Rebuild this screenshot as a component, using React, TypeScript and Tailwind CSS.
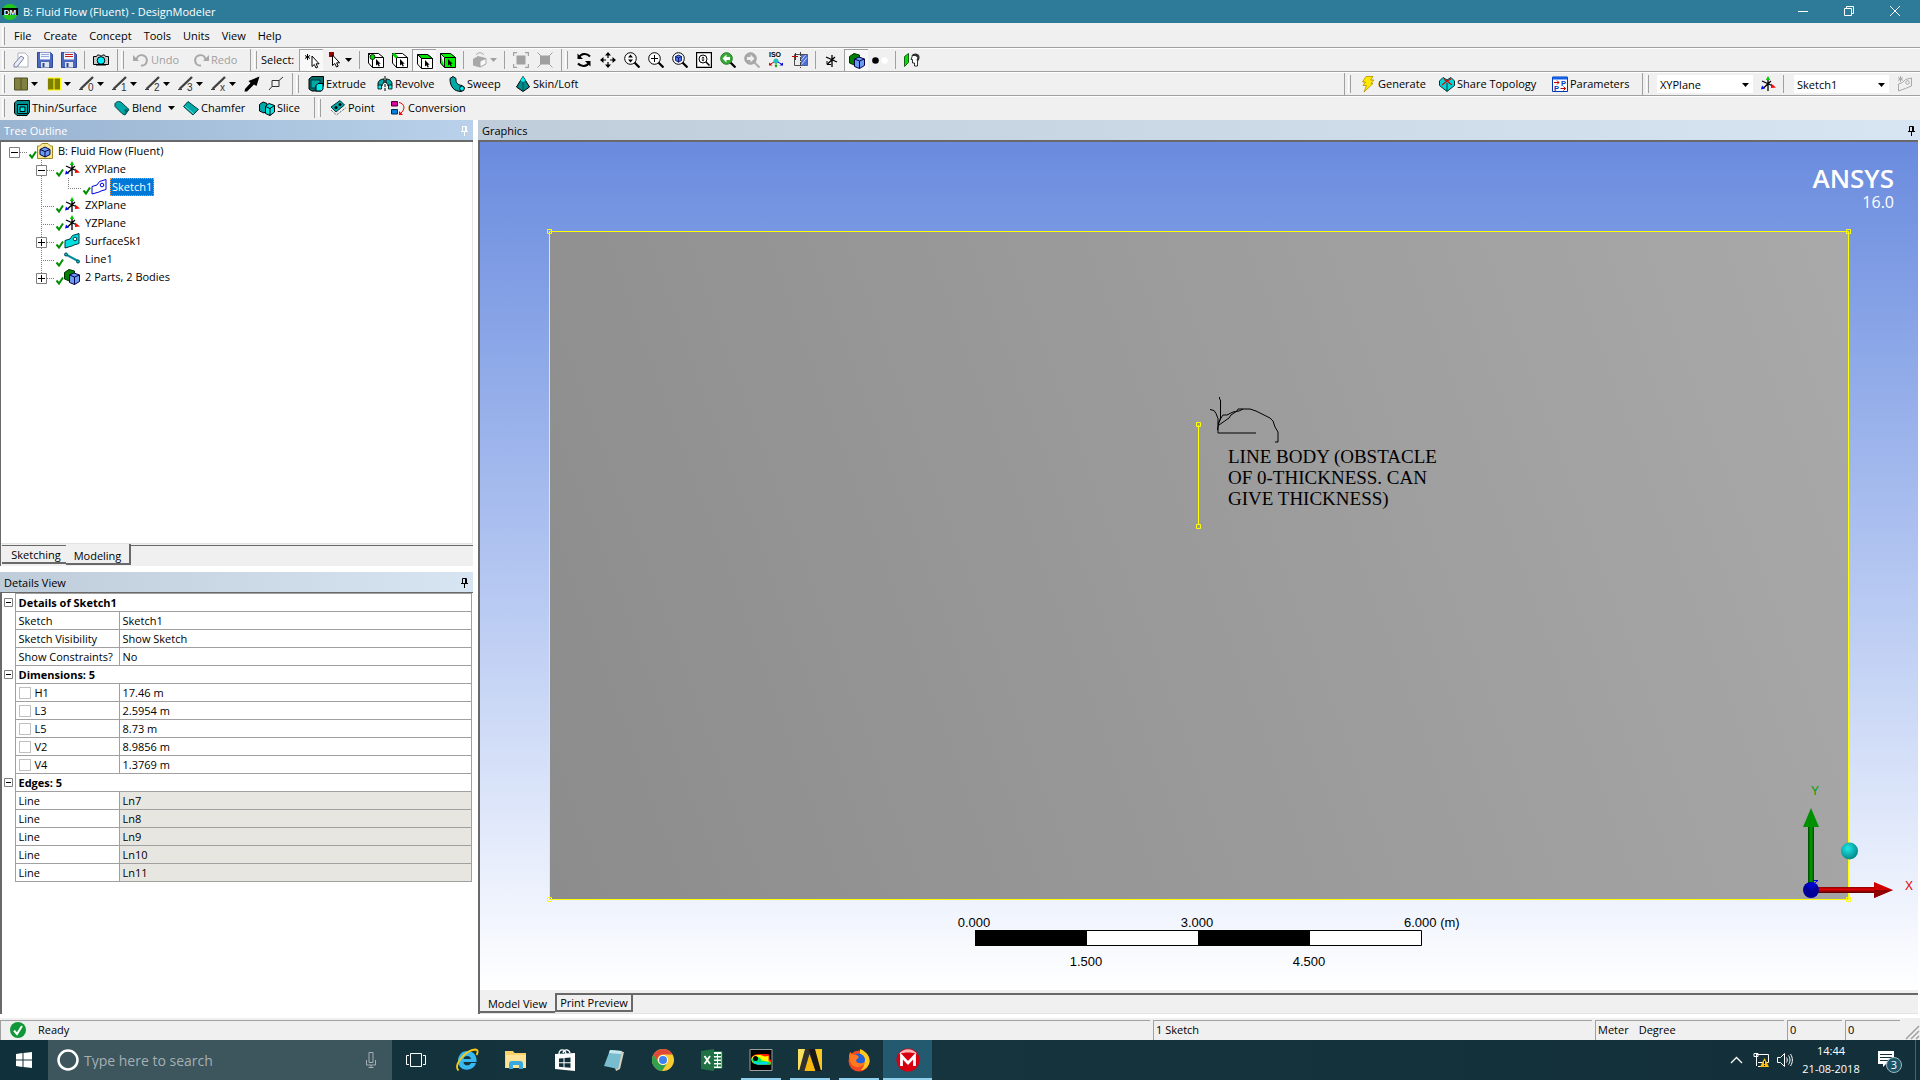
import type { ReactNode } from "react"
import clsx from "clsx"

type IconProps = { children: ReactNode; size?: number; className?: string }

const Icon = ({ children, size = 16, className }: IconProps) => (
  <svg width={size} height={size} viewBox="0 0 16 16" fill="none" className={clsx("shrink-0", className)} aria-hidden="true">
    {children}
  </svg>
)

const Caret = ({ color = "#000" }: { color?: string }) => (
  <svg width="7" height="4" viewBox="0 0 7 4" className="shrink-0" aria-hidden="true">
    <path d="M0 0h7L3.5 4z" fill={color} />
  </svg>
)

/* ---------- icons ---------- */

const CubeCursor = ({ mode }: { mode: "point" | "edge" | "face" | "body" }) => (
  <Icon>
    <path d="M4.500 5.500h11v10h-11zM4.500 5.500L.5 1.500h10l5 4M.5 1.500V11l4 4.500" fill={mode === "body" ? "#00f000" : "#fff"} stroke="#000" />
    {mode === "face" && <path d="M1 1.500h9.500l5 4h-11z" fill="#00e000" stroke="#000" />}
    {mode === "point" && <circle cx="4.500" cy="5" r="2.500" fill="#00e000" stroke="#000" strokeWidth=".8" />}
    {mode === "edge" && <path d="M1 1.500l4 4" stroke="#00d000" strokeWidth="3" />}
    <path d="M8 7v6.500l1.500-1.300 1.200 2.300 1.200-.6-1.100-2.200h1.900z" fill="#000" />
  </Icon>
)

const Magnifier = ({ children, ring = "#000", fill = "#fff", handle = "#000" }: { children?: ReactNode; ring?: string; fill?: string; handle?: string }) => (
  <Icon>
    <path d="M10.500 10.500l5 5" stroke={handle} strokeWidth="2.200" />
    <circle cx="6.500" cy="6.500" r="5.800" fill={fill} stroke={ring} />
    {children}
  </Icon>
)

const Axes = ({ plain = false }: { plain?: boolean }) => (
  <Icon>
    <path d="M8 3v12M2 5l11 5M3.500 12L11 5" stroke="#000" strokeWidth="1.300" />
    {!plain && (
      <>
        <path d="M8 0l2.200 4H5.800z" fill="#00c800" />
        <path d="M11 7.500l5 4-5 .5z" fill="#f00" />
        <path d="M1 13.500l1-4 3 3z" fill="#00f" />
      </>
    )}
    {plain && <path d="M3 9v3.500h4" stroke="#000" />}
  </Icon>
)

const SketchShape = ({ color = "#0000e0", fill = "none" }: { color?: string; fill?: string }) => (
  <Icon>
    <path d="M1 7.500l5-1.500 2.500-3.500 6.500-2v10l-5 1.500-2 1-7 2z" fill={fill} stroke={color} />
    <circle cx="11" cy="6" r="1.800" stroke={color} fill="#fff" />
  </Icon>
)

const Bodies = () => (
  <Icon>
    <path d="M.5 3.500L5 .5l5.500 1.500v8l-4 2.500L.5 10z" fill="#008000" stroke="#003000" />
    <path d="M5.500 6l4.500-2 5.500 2v6.500L10.500 15.500l-5-2z" fill="#6c9cf0" stroke="#000050" />
    <path d="M5.500 6l5 2 5-2M10.500 8v7.500" stroke="#000050" />
  </Icon>
)

const Floppy = ({ lines }: { lines: string }) => (
  <Icon>
    <path d="M.5.5h13l2 2v13H.5z" fill="#4a68c0" stroke="#30489a" />
    <path d="M3 .5h10v7H3z" fill="#f4f6ff" />
    <path d="M4 2.500h8M4 4.500h8" stroke={lines} />
    <path d="M4 10h8v5.500H4z" fill="#dfe3ea" />
    <path d="M5.500 11h2v4h-2z" fill="#30489a" />
  </Icon>
)

const PencilLine = ({ digit }: { digit: string }) => (
  <Icon>
    <path d="M1.500 13L14 1" stroke="#404040" strokeWidth="2.400" />
    <path d="M0 13.500h4" stroke="#404040" />
    <text x="9" y="15" fontSize="10" fontFamily="Liberation Sans, sans-serif" fill="#303030">{digit}</text>
  </Icon>
)

const Swatch = ({ color, line, divider }: { color: string; line: string; divider: string }) => (
  <Icon>
    <path d="M1.500 2h13v12h-13z" fill={color} stroke={line} />
    <path d="M8 2v12" stroke={divider} />
  </Icon>
)

const TEAL = "#00a8a8"

const icons = {
  eraser: (
    <Icon>
      <path d="M5 1h7l3 3v11H5z" fill="#fff" stroke="#b0b4c0" />
      <path d="M1 12l7-8 3 2-7 9H1z" fill="#e8ebf4" stroke="#7880a0" />
    </Icon>
  ),
  camera: (
    <Icon>
      <path d="M.5 4.500h3l1-1.500h2l1 1h1l1-1h2l1 1.500h3v8H.5z" fill="#c8c8c8" stroke="#000" />
      <circle cx="8" cy="8.500" r="3.800" fill="#00f0ff" stroke="#000" />
      <path d="M3 13h10" stroke="#000" />
    </Icon>
  ),
  undo: (
    <Icon>
      <path d="M3.500 7.500A5.200 5.200 0 1 1 8 13.500" stroke="#a8a8a8" strokeWidth="2" />
      <path d="M0 3v6h6z" fill="#a8a8a8" />
    </Icon>
  ),
  redo: (
    <Icon>
      <path d="M12.500 7.500A5.200 5.200 0 1 0 8 13.500" stroke="#a8a8a8" strokeWidth="2" />
      <path d="M16 3v6h-6z" fill="#a8a8a8" />
    </Icon>
  ),
  newSelection: (
    <Icon>
      <path d="M3.500 1v6M1 2.500l5 3M6 2.500l-5 3" stroke="#000" />
      <path d="M8 3v10.500l2.300-2 1.700 3.500 1.700-.8-1.600-3.400h3z" fill="#fff" stroke="#000" />
    </Icon>
  ),
  pointer: (
    <Icon>
      <path d="M2 0h5v5H2z" fill="#900" />
      <path d="M5.500 3v10.500l2.300-2 1.700 3.500 1.700-.8-1.600-3.400h3z" fill="#fff" stroke="#000" />
    </Icon>
  ),
  viewBox: (
    <Icon>
      <path d="M1 7l5-3 8 2v6l-6 3.500-7-2z" fill="#a8a8a8" />
      <path d="M8 9l6-2.500v5.500l-6 3z" fill="#f8f8f8" stroke="#a8a8a8" />
      <path d="M4 3c2-3 6-3 8 0" stroke="#a8a8a8" />
    </Icon>
  ),
  expand: (
    <Icon>
      <path d="M3.500 3.500h9v9h-9z" fill="#a0a0a0" />
      <path d="M.5 4V.5H4M12 .5h3.500V4M15.500 12v3.500H12M4 15.500H.5V12" stroke="#a0a0a0" strokeWidth="1.400" />
    </Icon>
  ),
  shrink: (
    <Icon>
      <path d="M3 3.500h10v9H3z" fill="#a0a0a0" />
      <path d="M.5.5l15 15M15.500.5l-15 15" stroke="#a0a0a0" />
    </Icon>
  ),
  rotate: (
    <Icon>
      <path d="M3 5.500C5 1 11 1 14 4.500M13 10.500c-2 4.500-8 4.500-11 1" stroke="#000" strokeWidth="2" />
      <path d="M1.500 1.500v5.500H7zM14.500 14.500V9H9z" fill="#000" />
    </Icon>
  ),
  pan: (
    <Icon>
      <path d="M8 1v5M8 10v5M1 8h5M10 8h5" stroke="#000" strokeWidth="1.200" />
      <path d="M8 0l3 3.500H5zM8 16l3-3.500H5zM0 8l3.500-3v6zM16 8l-3.500-3v6z" fill="#000" />
    </Icon>
  ),
  zoom: (
    <Magnifier>
      <path d="M6.500 2.500l2.500 3H4zM6.500 10.500L9 7.500H4z" fill="#000" />
    </Magnifier>
  ),
  zoomIn: (
    <Magnifier>
      <path d="M6.500 3v7M3 6.500h7" stroke="#000" />
    </Magnifier>
  ),
  zoomFit: (
    <Magnifier>
      <path d="M3.500 4.500l3-1.500 3 1.500v4l-3 1.700-3-1.700z" fill="#4a78e8" stroke="#000060" strokeWidth=".8" />
      <path d="M3.500 4.500l3 1.500 3-1.500M6.500 6v4" stroke="#000060" strokeWidth=".8" />
    </Magnifier>
  ),
  zoomBox: (
    <Icon>
      <path d="M.6.600h14.800v14.800H.6z" fill="#fff" stroke="#000" strokeWidth="1.200" />
      <circle cx="7" cy="7" r="4" stroke="#000" />
      <path d="M10 10l3.500 3.500" stroke="#000" strokeWidth="1.600" />
      <path d="M7 4.500l1.500 2h-3zM7 9.500l1.500-2h-3z" fill="#000" />
    </Icon>
  ),
  prevView: (
    <Magnifier ring="#1c7a1c" fill="#38a838">
      <path d="M2.500 6.500l4-4v2.500H10v3H6.500v2.500z" fill="#fff" />
    </Magnifier>
  ),
  nextView: (
    <Magnifier ring="#a0a0a0" fill="#a8a8a8" handle="#b0b0b0">
      <path d="M10.500 6.500l-4-4v2.500H3v3h3.500v2.500z" fill="#f0f0f0" />
    </Magnifier>
  ),
  iso: (
    <Icon>
      <text x="1" y="5" fontSize="7" fontWeight="700" fontFamily="Liberation Sans, sans-serif" fill="#000">ISO</text>
      <circle cx="8" cy="9" r="2.500" fill="#20c0c0" />
      <path d="M6 10l-4 2.500" stroke="#c00" />
      <path d="M10 10l4 2.500" stroke="#00c" />
      <path d="M8 11v4" stroke="#0a0" />
      <path d="M1 10.500v3h3.500z" fill="#c00" />
      <path d="M15 10.500v3h-3.500z" fill="#00c" />
      <path d="M6.500 13h3L8 16z" fill="#0a0" />
    </Icon>
  ),
  lookAt: (
    <Icon>
      <path d="M2.500 2.500h13v11h-13z" fill="#ececec" stroke="#505050" />
      <path d="M9 3h6.500v10.500H9z" fill="#5070d8" />
      <path d="M9.500 8l4-5M9.500 12.500l5.500-7" stroke="#c8d8ff" />
      <path d="M8.500 0v16" stroke="#404040" strokeDasharray="4 1" />
      <path d="M0 4.500h6M3.500 1v7" stroke="#c00000" />
    </Icon>
  ),
  dots: (
    <Icon>
      <circle cx="3.500" cy="8.500" r="3.300" fill="#000" />
      <circle cx="12.500" cy="8.500" r="3.200" fill="#fff" />
    </Icon>
  ),
  face: (
    <Icon>
      <path d="M.5 4.500l4-3v9l-4 4z" fill="#00e000" stroke="#004000" strokeWidth=".8" />
      <path d="M8.500 3.500l-1.500 4h1.500v3.500h2v3h3v-6l1-3-2-2z" fill="#fff" stroke="#000" strokeWidth=".8" />
      <path d="M7.500 4C8 .5 15 .5 15.500 4.500c.3 3-1 4-2 5l-1-1.500 1-2.500-2-1.500z" fill="#303030" />
    </Icon>
  ),
  planeArrow: (
    <Icon>
      <path d="M15.500.5L12.500 10l-2.500-1.500L3 15.500.500 15.500 1 13 6.500 7 4.500 5z" fill="#000" />
    </Icon>
  ),
  vertexLine: (
    <Icon>
      <path d="M4 4.500h7v6H4zM4 10.500L1 14M11 4.500L15 1" stroke="#303030" />
    </Icon>
  ),
  extrude: (
    <Icon>
      <path d="M1 3l3-2.500h11.500V9L13 15H4l-3-2z" fill="#006c6c" stroke="#000" />
      <path d="M3 4h9v5H8v3H3z" fill={TEAL} stroke="#003838" />
      <path d="M8 9.500l2-2h5v5.500l-1.500 2H8z" fill="#00f0f0" stroke="#000" />
    </Icon>
  ),
  revolve: (
    <Icon>
      <path d="M1 8c0-4 4-5 6-5v4c-1 0-2 1-2 3l-3.500 1zM15 8c0-4-4-5-6-5v4c1 0 2 1 2 3l3.500 1z" fill={TEAL} stroke="#000" />
      <path d="M1 9h3.500v4H1zM11.500 9H15v4h-3.500z" fill="#00f0f0" stroke="#000" strokeWidth=".8" />
      <path d="M8 0v16" stroke="#000" strokeDasharray="3 1" />
    </Icon>
  ),
  sweep: (
    <Icon>
      <path d="M1 2.500l3-2 3 2C6.500 7 9 9 13 9.500l2.500 2.500-3 3.500C5 15.500 1 11 1 2.500z" fill={TEAL} stroke="#000" />
      <ellipse cx="13" cy="12.500" rx="2.300" ry="2.600" fill="#00f0f0" stroke="#000" />
    </Icon>
  ),
  skin: (
    <Icon>
      <path d="M8 .5l2.500 4L14.500 11 8 15.500 1.500 11l4-6.500z" fill="#008c8c" stroke="#000" />
      <path d="M8 .5l2.500 4L8 6 5.500 4.500z" fill="#00f0f0" />
      <path d="M8 6v9.500" stroke="#004848" />
    </Icon>
  ),
  thin: (
    <Icon>
      <path d="M.5 3L3 .5h12.500V12L13 15.500H3L.5 13z" fill="#008c8c" stroke="#000" />
      <path d="M3.500 4.500h10v9h-10z" fill="#00b0b0" stroke="#000" />
      <path d="M6 7h5v4.500H6z" fill="#00e8e8" stroke="#000" />
    </Icon>
  ),
  blend: (
    <Icon>
      <path d="M1 3.500C3 1 6 1 8 3l7 6.500-4 5.500-3-1.500L1 6.500z" fill={TEAL} stroke="#004040" />
      <path d="M10.500 9L15 9.500 11 15z" fill="#006868" />
    </Icon>
  ),
  chamfer: (
    <Icon>
      <path d="M.5 6.500L5 1.500l10.500 8-5.500 5.500z" fill={TEAL} stroke="#004040" />
      <path d="M2 6l9 8" stroke="#60e0e0" />
    </Icon>
  ),
  slice: (
    <Icon>
      <path d="M.5 4.500L4 2l4 1.500v7L5 13l-4.500-2z" fill={TEAL} stroke="#000" />
      <path d="M6.500 6.500L10 3.500l5.500 2v6.500L11 15.500l-4.500-2z" fill="#00e8e8" stroke="#000" />
      <path d="M6.500 6.500l4.500 2 4.500-3M11 8.500v7" stroke="#000" />
    </Icon>
  ),
  point: (
    <Icon>
      <path d="M1 7l9-6.500L14.500 5 6 12z" fill={TEAL} stroke="#003838" />
      <path d="M1 10l5.500 5L15.500 8" stroke="#404040" strokeDasharray="1 1" />
      <circle cx="6" cy="7.500" r="1.500" fill="#000" />
      <circle cx="10" cy="4.500" r="1.500" fill="#000" />
    </Icon>
  ),
  conversion: (
    <Icon>
      <path d="M1.500 1.500h6V6h-6z" fill="#e000a0" stroke="#400030" />
      <path d="M1.500 9.500h6V14h-6z" fill="#0080e0" stroke="#002850" />
      <path d="M9 2.500c6 1 6.500 7 1.500 11" stroke="#f00000" />
      <path d="M9 11v4h4z" fill="#f00000" />
    </Icon>
  ),
  bolt: (
    <Icon>
      <path d="M6 .5h7L10.500 4H14l-3 3.500h2L4 16l2.500-6.500H3L5.500 6H2.500z" fill="#ffe800" stroke="#b09000" strokeWidth=".8" />
    </Icon>
  ),
  share: (
    <Icon>
      <path d="M.5 5L4 1.500l4 2.500 4-2.500L15.500 5v4.500L8 15.500.500 9.500z" fill="#00d8d8" stroke="#003030" />
      <path d="M3 9l5-4 5 4M8 5L5 3.500M8 5l4-2" stroke="#e00000" strokeWidth="1.200" />
      <path d="M8 7v8" stroke="#003030" />
    </Icon>
  ),
  params: (
    <Icon>
      <path d="M.5 1h15v14.500H.5z" fill="#fff" stroke="#0038b0" />
      <path d="M.5 1h15v2.500H.5z" fill="#1060e8" />
      <text x="9" y="9.500" fontSize="7.500" fontWeight="700" fontFamily="Liberation Sans, sans-serif" fill="#0038c0">P</text>
      <text x="2" y="14.500" fontSize="7.500" fontWeight="700" fontFamily="Liberation Sans, sans-serif" fill="#0038c0">P</text>
      <path d="M2 6.500h5M5 4.500l2 2-2 2M8.500 12.500h5M11.500 10.500l2 2-2 2" stroke="#c00000" />
    </Icon>
  ),
  newSketch: (
    <Icon>
      <path d="M1.500 8l4-1.500 3-3 6-1.500v8l-5 2-8 3z" stroke="#a8a8a8" />
      <circle cx="10.500" cy="6.500" r="1.800" stroke="#a8a8a8" />
      <path d="M3.500 0v6M1 1.500l5 3M6 1.500l-5 3" stroke="#a8a8a8" />
    </Icon>
  ),
  project: (
    <Icon>
      <path d="M.5 3h2L5 .5h6L13.500 3h2v12.500H.5z" fill="#f8e890" stroke="#a08820" />
      <path d="M3 6.500L8 4l5 2.500v5L8 14l-5-2.500z" fill="#6c9cf0" stroke="#000050" />
      <path d="M3 6.500l5 2 5-2M8 8.500V14" stroke="#000050" />
    </Icon>
  ),
  lineBody: (
    <Icon>
      <path d="M2 3.500l12 6.500" stroke="#008c9c" strokeWidth="2" />
      <circle cx="2" cy="3.500" r="1.500" fill="#00c8d8" stroke="#004048" />
      <circle cx="14" cy="10.500" r="1.500" fill="#00c8d8" stroke="#004048" />
    </Icon>
  ),
}

/* ---------- toolbars ---------- */

const Group = ({ children, className, last = false }: { children: ReactNode; className?: string; last?: boolean }) => (
  <div className={clsx("flex items-center h-full pl-[2px]", !last && "border-r border-[#a0a0a0] mr-px", className)}>
    <span className="w-[3px] h-[18px] mr-1 border-l border-l-white border-r border-r-[#a0a0a0]" />
    {children}
  </div>
)

const Sep = () => <span className="w-px h-[18px] ml-[3px] mr-1 bg-[#a0a0a0]" />

type ToolProps = { icon: ReactNode; name: string; pressed?: boolean; disabled?: boolean; caret?: boolean }

const Tool = ({ icon, name, pressed, disabled, caret }: ToolProps) => (
  <button
    aria-label={name}
    title={name}
    disabled={disabled}
    className={clsx(
      "flex items-center h-[22px] px-1 gap-[2px]",
      caret ? "w-[33px]" : "w-6",
      pressed && "bg-[#f8f8f8] border-l border-t border-[#a0a0a0]"
    )}
  >
    {icon}
    {caret && <Caret color={disabled ? "#a0a0a0" : "#000"} />}
  </button>
)

const LabelTool = ({ icon, text, width, disabled, caret }: { icon: ReactNode; text: string; width: string; disabled?: boolean; caret?: boolean }) => (
  <button disabled={disabled} className={clsx("flex items-center h-[22px] pl-[5px] gap-[2px] whitespace-nowrap", width, disabled && "text-[#a0a0a0]")}>
    {icon}
    <span>{text}</span>
    {caret && <span className="ml-1"><Caret /></span>}
  </button>
)

const Combo = ({ label, options, className }: { label: string; options: string[]; className: string }) => (
  <div className={clsx("relative h-[18px]", className)}>
    <select aria-label={label} className="appearance-none w-full h-full bg-white px-[3px] pt-px outline-none">
      {options.map((option) => (
        <option key={option}>{option}</option>
      ))}
    </select>
    <span className="absolute right-1 top-2 pointer-events-none"><Caret /></span>
  </div>
)

const rowClass = "flex items-center h-6 pb-px border-b border-white shadow-[inset_0_-1px_0_#a0a0a0]"

const Toolbars = () => (
  <div className="bg-[#f0f0f0]">
    <nav className="flex items-center h-[26px] pl-[2px] border-b border-white shadow-[inset_0_-1px_0_#a0a0a0]">
      <span className="w-[3px] h-[18px] mr-1 border-l border-l-white border-r border-r-[#a0a0a0]" />
      {["File", "Create", "Concept", "Tools", "Units", "View", "Help"].map((item) => (
        <button key={item} className="px-[5px] mr-[2px]">{item}</button>
      ))}
    </nav>

    <div className={rowClass}>
      <Group className="pr-1">
        <Tool name="New" icon={icons.eraser} />
        <Tool name="Save" icon={<Floppy lines="#98a8d8" />} />
        <Tool name="Save as" icon={<Floppy lines="#c02020" />} />
        <Sep />
        <Tool name="Capture" icon={icons.camera} />
      </Group>
      <Group className="pr-[2px]">
        <LabelTool disabled text="Undo" icon={icons.undo} width="w-[60px]" />
        <LabelTool disabled text="Redo" icon={icons.redo} width="w-[60px]" />
      </Group>
      <Group className="pr-1">
        <span className="w-[38px]">Select:</span>
        <Tool pressed name="New selection" icon={icons.newSelection} />
        <Tool caret name="Select mode" icon={icons.pointer} />
        <Sep />
        <Tool name="Points" icon={<CubeCursor mode="point" />} />
        <Tool name="Edges" icon={<CubeCursor mode="edge" />} />
        <Tool pressed name="Faces" icon={<CubeCursor mode="face" />} />
        <Tool name="Bodies" icon={<CubeCursor mode="body" />} />
        <Sep />
        <Tool caret disabled name="Extend selection" icon={icons.viewBox} />
        <Sep />
        <Tool disabled name="Expand" icon={icons.expand} />
        <Tool disabled name="Shrink" icon={icons.shrink} />
      </Group>
      <Group last>
        <Tool name="Rotate" icon={icons.rotate} />
        <Tool name="Pan" icon={icons.pan} />
        <Tool name="Zoom" icon={icons.zoom} />
        <Tool name="Zoom in" icon={icons.zoomIn} />
        <Tool name="Zoom to fit" icon={icons.zoomFit} />
        <Tool name="Box zoom" icon={icons.zoomBox} />
        <Tool name="Previous view" icon={icons.prevView} />
        <Tool disabled name="Next view" icon={icons.nextView} />
        <Tool name="Isometric" icon={icons.iso} />
        <Tool name="Look at" icon={icons.lookAt} />
        <Sep />
        <Tool name="Display plane" icon={<Axes plain />} />
        <Tool pressed name="Display model" icon={<Bodies />} />
        <Tool name="Display points" icon={icons.dots} />
        <Sep />
        <Tool name="Look at face" icon={icons.face} />
      </Group>
    </div>

    <div className={rowClass}>
      <Group className="pr-1">
        <Tool caret name="Face color" icon={<Swatch color="#808040" line="#505020" divider="#505020" />} />
        <Tool caret name="Edge color" icon={<Swatch color="#808000" line="#ffff00" divider="#ffff00" />} />
        {["0", "1", "2", "3", "x"].map((digit) => (
          <Tool key={digit} caret name={`Edge joint ${digit}`} icon={<PencilLine digit={digit} />} />
        ))}
        <Tool name="Edge direction" icon={icons.planeArrow} />
        <Tool name="Show vertices" icon={icons.vertexLine} />
      </Group>
      <Group className="flex-1">
        <LabelTool text="Extrude" icon={icons.extrude} width="w-[69px]" />
        <LabelTool text="Revolve" icon={icons.revolve} width="w-[72px]" />
        <LabelTool text="Sweep" icon={icons.sweep} width="w-[66px]" />
        <LabelTool text="Skin/Loft" icon={icons.skin} width="w-[78px]" />
      </Group>
      <Group className="pr-[2px]">
        <LabelTool text="Generate" icon={icons.bolt} width="w-[79px]" />
        <LabelTool text="Share Topology" icon={icons.share} width="w-[113px]" />
        <LabelTool text="Parameters" icon={icons.params} width="w-[93px]" />
      </Group>
      <Group last className="pr-[3px]">
        <Combo label="Active plane" options={["XYPlane", "ZXPlane", "YZPlane"]} className="w-[96px] ml-1 mr-[3px]" />
        <Tool name="New plane" icon={<Axes />} />
        <Sep />
        <Combo label="Active sketch" options={["Sketch1"]} className="w-[95px] ml-[6px] mr-1" />
        <Tool disabled name="New sketch" icon={icons.newSketch} />
      </Group>
    </div>

    <div className="flex items-center h-[23px] pb-[2px]">
      <Group className="pr-px">
        <LabelTool text="Thin/Surface" icon={icons.thin} width="w-[100px]" />
        <LabelTool caret text="Blend" icon={icons.blend} width="w-[69px]" />
        <LabelTool text="Chamfer" icon={icons.chamfer} width="w-[76px]" />
        <LabelTool text="Slice" icon={icons.slice} width="w-[59px]" />
      </Group>
      <Group last>
        <LabelTool text="Point" icon={icons.point} width="w-[60px]" />
        <LabelTool text="Conversion" icon={icons.conversion} width="w-[85px]" />
      </Group>
    </div>
  </div>
)

/* ---------- tree ---------- */

const PaneHeader = ({ title, active = false }: { title: string; active?: boolean }) => (
  <header
    className={clsx(
      "flex items-center justify-between h-5 pt-[2px] pl-1 pr-[5px] bg-linear-to-r",
      active ? "from-[#99b4d1] to-[#b9d1ea] text-white" : "from-[#bfcddb] to-[#d7e4f2]"
    )}
  >
    <h2>{title}</h2>
    <button aria-label={`Pin ${title}`}>
      <svg width="7" height="10" viewBox="0 0 7 10" fill="none" stroke="currentColor" aria-hidden="true">
        <path d="M1.500 5.500v-5h4v5M0 5.500h7M3.500 6v4M4.500 1v4" />
      </svg>
    </button>
  </header>
)

type Link = "up" | "down" | "right"
type Cell = { links: Link[]; box?: "+" | "-" }

const TreeCell = ({ cell, label }: { cell: Cell; label: string }) => {
  const drawing = (
    <svg width="27" height="18" viewBox="0 0 27 18" fill="none" className="shrink-0" aria-hidden="true">
      {cell.links.includes("up") && <path d="M13.500 0v10" stroke="#808080" strokeDasharray="1 1" />}
      {cell.links.includes("down") && <path d="M13.500 10v8" stroke="#808080" strokeDasharray="1 1" />}
      {cell.links.includes("right") && <path d="M13 10.500h14" stroke="#808080" strokeDasharray="1 1" />}
      {cell.box && (
        <>
          <path d="M8.500 5.500h10v10h-10z" fill="#fff" stroke="#808080" />
          <path d={cell.box === "+" ? "M10 10.500h7M13.500 7v7" : "M10 10.500h7"} stroke="#000" />
        </>
      )}
    </svg>
  )
  return cell.box ? <button aria-label={`Toggle ${label}`}>{drawing}</button> : drawing
}

const tree: { label: string; icon: ReactNode; cells: Cell[]; selected?: boolean }[] = [
  { label: "B: Fluid Flow (Fluent)", icon: icons.project, cells: [{ links: ["right"], box: "-" }] },
  { label: "XYPlane", icon: <Axes />, cells: [{ links: [] }, { links: ["up", "down", "right"], box: "-" }] },
  { label: "Sketch1", icon: <SketchShape />, cells: [{ links: [] }, { links: ["up", "down"] }, { links: ["up", "right"] }], selected: true },
  { label: "ZXPlane", icon: <Axes />, cells: [{ links: [] }, { links: ["up", "down", "right"] }] },
  { label: "YZPlane", icon: <Axes />, cells: [{ links: [] }, { links: ["up", "down", "right"] }] },
  { label: "SurfaceSk1", icon: <SketchShape color="#003840" fill="#00e0e0" />, cells: [{ links: [] }, { links: ["up", "down", "right"], box: "+" }] },
  { label: "Line1", icon: icons.lineBody, cells: [{ links: [] }, { links: ["up", "down", "right"] }] },
  { label: "2 Parts, 2 Bodies", icon: <Bodies />, cells: [{ links: [] }, { links: ["up", "right"], box: "+" }] },
]

const TreeOutline = () => (
  <section>
    <PaneHeader active title="Tree Outline" />
    <div className="border-l border-t-2 border-[#696969]">
      <ul className="h-[402px] bg-white border-b border-r border-[#e3e3e3]">
        {tree.map((node) => (
          <li key={node.label} className="flex items-center h-[18px]">
            {node.cells.map((cell, i) => (
              <TreeCell key={i} cell={cell} label={node.label} />
            ))}
            <svg width="9" height="18" viewBox="0 0 9 18" fill="none" className="shrink-0" aria-hidden="true">
              <path d="M1.500 12.500l2.500 3 4-6" stroke="#009000" strokeWidth="2" />
            </svg>
            {node.icon}
            <span className={clsx("h-[18px] leading-4 ml-[3px] px-px border", node.selected ? "bg-[#0078d7] text-white border-dotted border-[#ff9040]" : "border-transparent")}>
              {node.label}
            </span>
          </li>
        ))}
      </ul>
      <div className="flex h-[22px] pl-px bg-[#f0f0f0]">
        <button className="w-[64px] h-[19px] mt-px pl-1 border-t border-b-2 border-[#696969] text-center leading-[18px]">Sketching</button>
        <button className="w-[65px] h-[21px] border-r-2 border-b-2 border-[#696969] text-center leading-6">Modeling</button>
        <span className="flex-1 h-px bg-[#696969] mt-px" />
      </div>
    </div>
  </section>
)

/* ---------- details ---------- */

type Row = { name: string; value: string; check?: boolean; readOnly?: boolean }

const details: { title: string; rows: Row[] }[] = [
  {
    title: "Details of Sketch1",
    rows: [
      { name: "Sketch", value: "Sketch1" },
      { name: "Sketch Visibility", value: "Show Sketch" },
      { name: "Show Constraints?", value: "No" },
    ],
  },
  {
    title: "Dimensions: 5",
    rows: [
      { name: "H1", value: "17.46 m", check: true },
      { name: "L3", value: "2.5954 m", check: true },
      { name: "L5", value: "8.73 m", check: true },
      { name: "V2", value: "8.9856 m", check: true },
      { name: "V4", value: "1.3769 m", check: true },
    ],
  },
  {
    title: "Edges: 5",
    rows: ["Ln7", "Ln8", "Ln9", "Ln10", "Ln11"].map((value) => ({ name: "Line", value, readOnly: true })),
  },
]

const DetailsView = () => (
  <section className="flex flex-col flex-1 mt-1.5">
    <PaneHeader title="Details View" />
    <div className="flex-1 bg-white border-l-2 border-t border-[#696969] pr-px">
      <table className="w-full table-fixed border-collapse">
        <colgroup>
          <col className="w-[13px]" />
          <col className="w-[104px]" />
          <col />
        </colgroup>
        {details.map((group) => (
          <tbody key={group.title}>
            <tr className="h-[18px]">
              <td className="p-0">
                <button aria-label={`Toggle ${group.title}`} className="block mx-[2px]">
                  <svg width="9" height="9" viewBox="0 0 9 9" fill="none" aria-hidden="true">
                    <path d="M.5.5h8v8h-8z" stroke="#808080" />
                    <path d="M2 4.500h5" stroke="#000" />
                  </svg>
                </button>
              </td>
              <th colSpan={2} className="p-0 pl-[3px] border border-[#a0a0a0] text-left font-bold leading-4">{group.title}</th>
            </tr>
            {group.rows.map((row) => (
              <tr key={row.value} className="h-[18px]">
                <td className="p-0" />
                <td className="p-0 pl-[3px] border border-[#a0a0a0] leading-4 whitespace-nowrap">
                  {row.check ? (
                    <label className="flex items-center gap-1">
                      <input type="checkbox" className="appearance-none w-3 h-3 border border-[#c0c0c0] bg-white" />
                      {row.name}
                    </label>
                  ) : (
                    row.name
                  )}
                </td>
                <td className={clsx("p-0 pl-[3px] border border-[#a0a0a0] leading-4", row.readOnly && "bg-[#e8e6e1]")}>{row.value}</td>
              </tr>
            ))}
          </tbody>
        ))}
      </table>
    </div>
  </section>
)

/* ---------- graphics ---------- */

const Scene = () => (
  <svg viewBox="0 0 1438 848" fill="none" className="absolute inset-0 w-full h-full" role="img" aria-label="Model view">
    <defs>
      <linearGradient id="plate" gradientUnits="userSpaceOnUse" x1="69" y1="757" x2="1430" y2="265">
        <stop offset="0" stopColor="#8c8c8c" />
        <stop offset="1" stopColor="#a9a9a9" />
      </linearGradient>
      <linearGradient id="greenShaft">
        <stop offset="0" stopColor="#004400" />
        <stop offset=".5" stopColor="#00a000" />
        <stop offset="1" stopColor="#004c00" />
      </linearGradient>
      <linearGradient id="redShaft" x2="0" y2="1">
        <stop offset="0" stopColor="#8c0000" />
        <stop offset=".4" stopColor="#e00000" />
        <stop offset="1" stopColor="#500000" />
      </linearGradient>
      <radialGradient id="cyanBall" cx=".4" cy=".35" r=".7">
        <stop offset="0" stopColor="#20e8e8" />
        <stop offset="1" stopColor="#008080" />
      </radialGradient>
    </defs>

    <path d="M69 89h1299v668H69z" fill="url(#plate)" />
    <path d="M69.500 89.500h1299v668H69.500z" stroke="#ff0" />
    <path d="M67.500 87.500h4v4h-4zM1366.500 87.500h4v4h-4zM67.500 755.500h4v4h-4zM1366.500 755.500h4v4h-4z" stroke="#ff0" />

    <path d="M718.500 283v100" stroke="#ff0" />
    <path d="M716.500 280.500h4v4h-4zM716.500 382.500h4v4h-4z" stroke="#ff0" />
    <path
      d="M739.500 255v2l1 1v18l-2 6-1 6M730 267.500l4 1 2 3 2 5v14.500h38M738 282l3-6 2-3h4l6-3 6-1 4-2M739 283l10-7 2-3 6-4 1-2h12l6 2 8 4 6 3 3 3 2 6 3 5v10h-3"
      stroke="#000"
    />
    <g fill="#000" fontFamily="Liberation Serif, serif" fontSize="19">
      <text x="748" y="321">LINE BODY (OBSTACLE</text>
      <text x="748" y="342">OF 0-THICKNESS. CAN</text>
      <text x="748" y="363">GIVE THICKNESS)</text>
    </g>

    <path d="M495.500 788.500h446v15h-446z" fill="#fff" stroke="#000" />
    <path d="M495 788h112v16H495zM718 788h112v16H718z" fill="#000" />
    <g fill="#000" fontFamily="Liberation Sans, sans-serif" fontSize="13" textAnchor="middle">
      <text x="494" y="785">0.000</text>
      <text x="717" y="785">3.000</text>
      <text x="606" y="824">1.500</text>
      <text x="829" y="824">4.500</text>
      <text x="924" y="785" textAnchor="start">6.000 (m)</text>
    </g>

    <path d="M1328 685h6v63h-6z" fill="url(#greenShaft)" />
    <path d="M1331 666l8 19h-16z" fill="#009000" />
    <path d="M1331 745h63v6h-63z" fill="url(#redShaft)" />
    <path d="M1413 748l-19-8v16z" fill="#d00000" />
    <path d="M1394 748h19l-19 8z" fill="#900000" />
    <circle cx="1331" cy="748" r="8" fill="#000098" />
    <path d="M1331 748l-6-5 6-3 6 3z" fill="#0000c8" />
    <path d="M1333 738.500h5l-4 3" stroke="#0000e0" />
    <circle cx="1369.500" cy="709" r="8.500" fill="url(#cyanBall)" />
    <g fontFamily="Liberation Sans, sans-serif" fontSize="12" textAnchor="middle">
      <text x="1335" y="653" fill="#00a000">Y</text>
      <text x="1429" y="748" fill="#e00000">X</text>
    </g>
  </svg>
)

const Graphics = () => (
  <section className="flex flex-col flex-1 min-w-0">
    <PaneHeader title="Graphics" />
    <div className="flex flex-col flex-1 border-l-2 border-t-2 border-[#696969] mr-[2px]">
      <div className="relative flex-1 bg-linear-to-b from-[#6a8bde] to-white">
        <Scene />
        <div className="absolute right-6 top-5 text-right text-white">
          <p className="text-[26px] leading-8 font-semibold">ANSYS</p>
          <p className="text-[16px] leading-4">16.0</p>
        </div>
      </div>
      <div className="flex h-6 bg-[#f0f0f0] border-b border-[#e3e3e3]">
        <button className="w-[75px] h-[23px] pt-[2px] border-b-2 border-[#696969] leading-6 text-center">Model View</button>
        <button className="w-[78px] h-[19px] mt-[3px] border-2 border-[#696969] leading-4 text-center">Print Preview</button>
        <span className="flex-1 h-[2px] mt-[3px] bg-[#696969]" />
      </div>
    </div>
  </section>
)

/* ---------- status bar ---------- */

const StatusCell = ({ children, className }: { children: ReactNode; className: string }) => (
  <div className={clsx("flex items-center h-5 pb-[2px] border-l border-t border-[#a0a0a0] mr-[3px] pl-[2px]", className)}>{children}</div>
)

const StatusBar = () => (
  <footer className="flex items-end h-[22px] bg-[#f0f0f0]">
    <StatusCell className="flex-1">
      <Icon className="ml-[7px]">
        <circle cx="8" cy="8" r="8" fill="#109838" />
        <path d="M4 8.500l3 3.500 5-8" stroke="#fff" strokeWidth="2" />
      </Icon>
      <span className="ml-3">Ready</span>
    </StatusCell>
    <StatusCell className="w-[439px]">1 Sketch</StatusCell>
    <StatusCell className="w-[189px] gap-2.5"><span>Meter</span><span>Degree</span></StatusCell>
    <StatusCell className="w-[55px]">0</StatusCell>
    <StatusCell className="w-[55px]">0</StatusCell>
    <svg width="17" height="20" viewBox="0 0 17 20" fill="none" aria-hidden="true">
      <path d="M3 19L16 6M8 19l8-8M13 19l3-3" stroke="#a0a0a0" strokeWidth="1.500" />
    </svg>
  </footer>
)

/* ---------- taskbar ---------- */

const AppIcon = ({ children }: { children: ReactNode }) => (
  <svg width="24" height="24" viewBox="0 0 24 24" fill="none" aria-hidden="true">{children}</svg>
)

const apps: { name: string; icon: ReactNode; running?: boolean; active?: boolean }[] = [
  {
    name: "Internet Explorer",
    icon: (
      <AppIcon>
        <path d="M12.500 3C6 3 3 8 3 13c0 11 15.500 11.500 18 2h-5c-1.500 3.500-7.500 3-7.500-1h13C22 7 18 3 12.500 3zM8.500 11c.5-4 7-4 7.500 0z" fill="#38b8f0" />
        <path d="M3.500 22.500C-2 17 11 2 20 1.500c3.500 0 3 3 1.500 5.500" stroke="#f8c818" strokeWidth="1.800" />
      </AppIcon>
    ),
  },
  {
    name: "File Explorer",
    icon: (
      <AppIcon>
        <path d="M1 3h8l1.500 2H22v15H1z" fill="#f8d468" />
        <path d="M2 7h20v13H2z" fill="#fde498" />
        <path d="M5 21v-5c0-2 1-3 3-3h8c2 0 3 1 3 3v5h-4v-4H9v4z" fill="#38a8e0" />
      </AppIcon>
    ),
  },
  {
    name: "Store",
    icon: (
      <AppIcon>
        <path d="M2 6l20-1v18L2 21z" fill="#fff" />
        <path d="M6 6c0-5.500 6-5.500 7 0M10 5c1-4.500 6-4 7 0" stroke="#fff" strokeWidth="1.300" />
        <path d="M6 10.500l4.500-.3v4H6zM11.500 10l6-.4v4.600h-6zM6 15.200h4.500v4l-4.500-.4zM11.500 15.200h6v4.600l-6-.5z" fill="#12303a" />
      </AppIcon>
    ),
  },
  {
    name: "Notepad",
    icon: (
      <AppIcon>
        <path d="M8 2l14 2-4 17-4 2z" fill="#d8d0b8" />
        <path d="M8 2l12 1-4 18L2 18z" fill="#78bcd0" />
        <path d="M8 2l12 1-1 3-12-1z" fill="#c8e8f0" />
      </AppIcon>
    ),
  },
  {
    name: "Chrome",
    icon: (
      <AppIcon>
        <circle cx="12" cy="12" r="11" fill="#f8cc30" />
        <path d="M2.500 6.500a11 11 0 0 1 19 0H12a5.500 5.500 0 0 0-5 8z" fill="#e04838" />
        <path d="M2.500 6.500A11 11 0 0 0 11 23l5.500-8.500c-2 3.500-7.500 3.500-9.500-.5z" fill="#30a050" />
        <circle cx="12" cy="12" r="5" fill="#fff" />
        <circle cx="12" cy="12" r="4" fill="#4080f0" />
      </AppIcon>
    ),
  },
  {
    name: "Excel",
    icon: (
      <AppIcon>
        <path d="M12 3.500h10v17H12z" fill="#fff" stroke="#207245" />
        <path d="M14 7h3M18 7h3M14 10.500h3M18 10.500h3M14 14h3M18 14h3M14 17.500h3M18 17.500h3" stroke="#207245" strokeWidth="1.800" />
        <path d="M1 3l13-2v22L1 21z" fill="#207245" />
        <path d="M4.500 8l5.500 8M10 8l-5.500 8" stroke="#fff" strokeWidth="1.800" />
      </AppIcon>
    ),
  },
  {
    name: "Fluent",
    running: true,
    icon: (
      <AppIcon>
        <path d="M1 1.500h22v21H1z" fill="#000" stroke="#a0a0a0" />
        <path d="M2.500 10c1-4 6-4 9-4h7c2 0 2.500 2 2 5l1.500 1v4H10c-5 1-8-2-7.500-6z" fill="#ff2000" />
        <path d="M2.500 10.500c2-4 6-3.500 9-3.500l4 1.500 4-.5v5l2 1v2.500H10c-5 0-8-2-7.500-6z" fill="#ff0" />
        <path d="M3 11c2-2 6-3 8-1l2 2.500 5 1 3.500.5v2.500H10c-4 0-7-1-7-5.500z" fill="#00e860" />
        <path d="M4 12c4 3 7 2.500 10 2h4v2.500h-7c-4 0-6-1-7-4.500z" fill="#00d8f0" />
        <circle cx="6.500" cy="10.500" r="2.500" fill="#000" />
      </AppIcon>
    ),
  },
  {
    name: "Workbench",
    running: true,
    icon: (
      <AppIcon>
        <path d="M0 1h8L3.500 22H0z" fill="#f8e060" />
        <path d="M16 1h8v21h-3.500z" fill="#f8c820" />
        <path d="M7 1h4l2 6-5 16H1z" fill="#303030" />
        <path d="M11.500 6L6.500 23h11z" fill="#f8b810" />
        <path d="M11 1h6l6 22h-5.500z" fill="#181818" />
      </AppIcon>
    ),
  },
  {
    name: "Firefox",
    running: true,
    icon: (
      <AppIcon>
        <circle cx="12" cy="13" r="10.500" fill="#f04820" />
        <path d="M13 1c8 3 11 10 9 15-2 4-5 6-8 6 5-5 4-10-1-15z" fill="#ffc820" />
        <circle cx="11.500" cy="12" r="6.500" fill="#2060d8" />
        <path d="M2 8l1-4 3 3c3-1 4 0 6 2l-3 3c0 4 6 4 9 2-1 6-13 8-15-1z" fill="#ff7820" />
      </AppIcon>
    ),
  },
  {
    name: "MathType",
    running: true,
    active: true,
    icon: (
      <AppIcon>
        <circle cx="12" cy="12" r="11.500" fill="#d80010" />
        <path d="M3 6a11 11 0 0 1 18 0c-5-2-13-2-18 0z" fill="#f8b8b8" />
        <path d="M5.500 18V8l6.500 7 6.500-7v10" stroke="#fff" strokeWidth="2.800" />
      </AppIcon>
    ),
  },
]

const Taskbar = () => (
  <div className="flex items-stretch h-10 bg-linear-to-r from-[#10313b] via-[#16343d] to-[#122f3a] text-white">
    <button aria-label="Start" className="flex items-center w-12 pl-4">
      <Icon>
        <path d="M0 2l6.500-1v6.500H0zM7.500 1L16 0v7.500H7.500zM0 8.500h6.500V15L0 14zM7.500 8.500H16V16l-8.500-1z" fill="#fff" />
      </Icon>
    </button>
    <label className="flex items-center w-[344px] pl-2 pr-[13px] gap-1 bg-[#3d555c]">
      <svg width="24" height="24" viewBox="0 0 24 24" fill="none" aria-hidden="true">
        <circle cx="12" cy="12" r="9.500" stroke="#fff" strokeWidth="2.500" />
      </svg>
      <input placeholder="Type here to search" aria-label="Search" className="flex-1 min-w-0 pt-[2px] bg-transparent text-[14px] placeholder:text-[#a4b0b4] outline-none" />
      <Icon>
        <path d="M6 .5h4v10H6zM3.500 8v5h9V8M8 13v3M5.500 15.500h5" stroke="#a4b0b4" />
      </Icon>
    </label>
    <button aria-label="Task view" className="flex items-center justify-center w-12">
      <svg width="20" height="16" viewBox="0 0 20 16" fill="none" stroke="#fff" aria-hidden="true">
        <path d="M4.500 1.500h11v13h-11zM3 3.500H.5v9H3M17 3.500h2.500v9H17" />
      </svg>
    </button>
    <div className="flex pl-[2px]">
      {apps.map((app) => (
        <button key={app.name} aria-label={app.name} className={clsx("flex flex-col items-center w-[49px] pt-2", app.active && "bg-[#235a70]")}>
          {app.icon}
          {app.running && <span className={clsx("h-[2px] mt-1.5 bg-[#90d0ec]", app.active ? "w-full" : "w-10")} />}
        </button>
      ))}
    </div>
    <div className="flex items-center ml-auto">
      <button aria-label="Hidden icons" className="mr-2.5">
        <svg width="13" height="8" viewBox="0 0 13 8" fill="none" aria-hidden="true">
          <path d="M1 7l5.500-5.500L12 7" stroke="#fff" strokeWidth="1.300" />
        </svg>
      </button>
      <Icon className="mr-2">
        <path d="M3 2.500h12.500v8H5M3.500 1v13M1 1.500h4v3H1zM5 14.500h5" stroke="#fff" />
        <path d="M11.500 6l4.500 9H7z" fill="#fcc010" />
        <path d="M11.500 9v3M11.500 13v1" stroke="#000" />
      </Icon>
      <Icon className="mr-2">
        <path d="M.5 5.500h3l4-4v13l-4-4h-3z" stroke="#fff" />
        <path d="M9.500 5.500c1 1.500 1 3.500 0 5M11.500 3.500c2 3 2 6 0 9M13.500 2c2.500 4 2.500 8 0 12" stroke="#fff" />
      </Icon>
      <div className="w-[60px] text-center leading-[18px]">
        <p>14:44</p>
        <p>21-08-2018</p>
      </div>
      <button aria-label="Notifications" className="ml-4 mr-3">
        <svg width="26" height="26" viewBox="0 0 26 26" fill="none" aria-hidden="true">
          <path d="M1 4h16v13H9l-3 3v-3H1z" fill="#fff" />
          <path d="M3 7.500h12M3 10.500h12M3 13.500h8" stroke="#12303a" />
          <circle cx="17" cy="18" r="7.500" fill="#1c5468" stroke="#a0b8c0" />
          <text x="17" y="22" fontSize="11" fontFamily="Open Sans, sans-serif" textAnchor="middle" fill="#fff">3</text>
        </svg>
      </button>
      <span className="w-px h-10 mr-1 bg-[#7890988c]" />
    </div>
  </div>
)

const TitleBar = () => (
  <header className="flex items-center h-[23px] bg-[#2d7a99] text-white">
    <svg width="16" height="16" viewBox="0 0 16 16" className="ml-[2px] mr-[5px]" aria-hidden="true">
      <circle cx="8" cy="8" r="8" fill="#20c820" />
      <path d="M0 4h16v7H0z" fill="#000" />
      <text x="8" y="10.500" fontSize="8" fontWeight="700" fontFamily="Liberation Sans, sans-serif" textAnchor="middle" fill="#fff">DM</text>
    </svg>
    <h1>B: Fluid Flow (Fluent) - DesignModeler</h1>
    <div className="flex ml-auto mr-[2px] pb-[2px]">
      {[
        { name: "Minimize", d: "M1 6.500h10" },
        { name: "Restore", d: "M1.500 3.500h7v7h-7zM3.500 3.500v-2h7v7h-2" },
        { name: "Close", d: "M1 1l10 10M11 1L1 11" },
      ].map((control) => (
        <button key={control.name} aria-label={control.name} className="flex justify-center w-[46px]">
          <svg width="12" height="12" viewBox="0 0 12 12" fill="none" stroke="#fff" aria-hidden="true">
            <path d={control.d} />
          </svg>
        </button>
      ))}
    </div>
  </header>
)

export default function App() {
  return (
    <div className="flex flex-col min-h-screen bg-white text-black text-[11px] leading-4 font-['Open_Sans','Noto_Sans',sans-serif]">
      <TitleBar />
      <Toolbars />
      <main className="flex flex-1 gap-[5px] mb-1">
        <div className="flex flex-col w-[473px] shrink-0">
          <TreeOutline />
          <DetailsView />
        </div>
        <Graphics />
      </main>
      <StatusBar />
      <Taskbar />
    </div>
  )
}
